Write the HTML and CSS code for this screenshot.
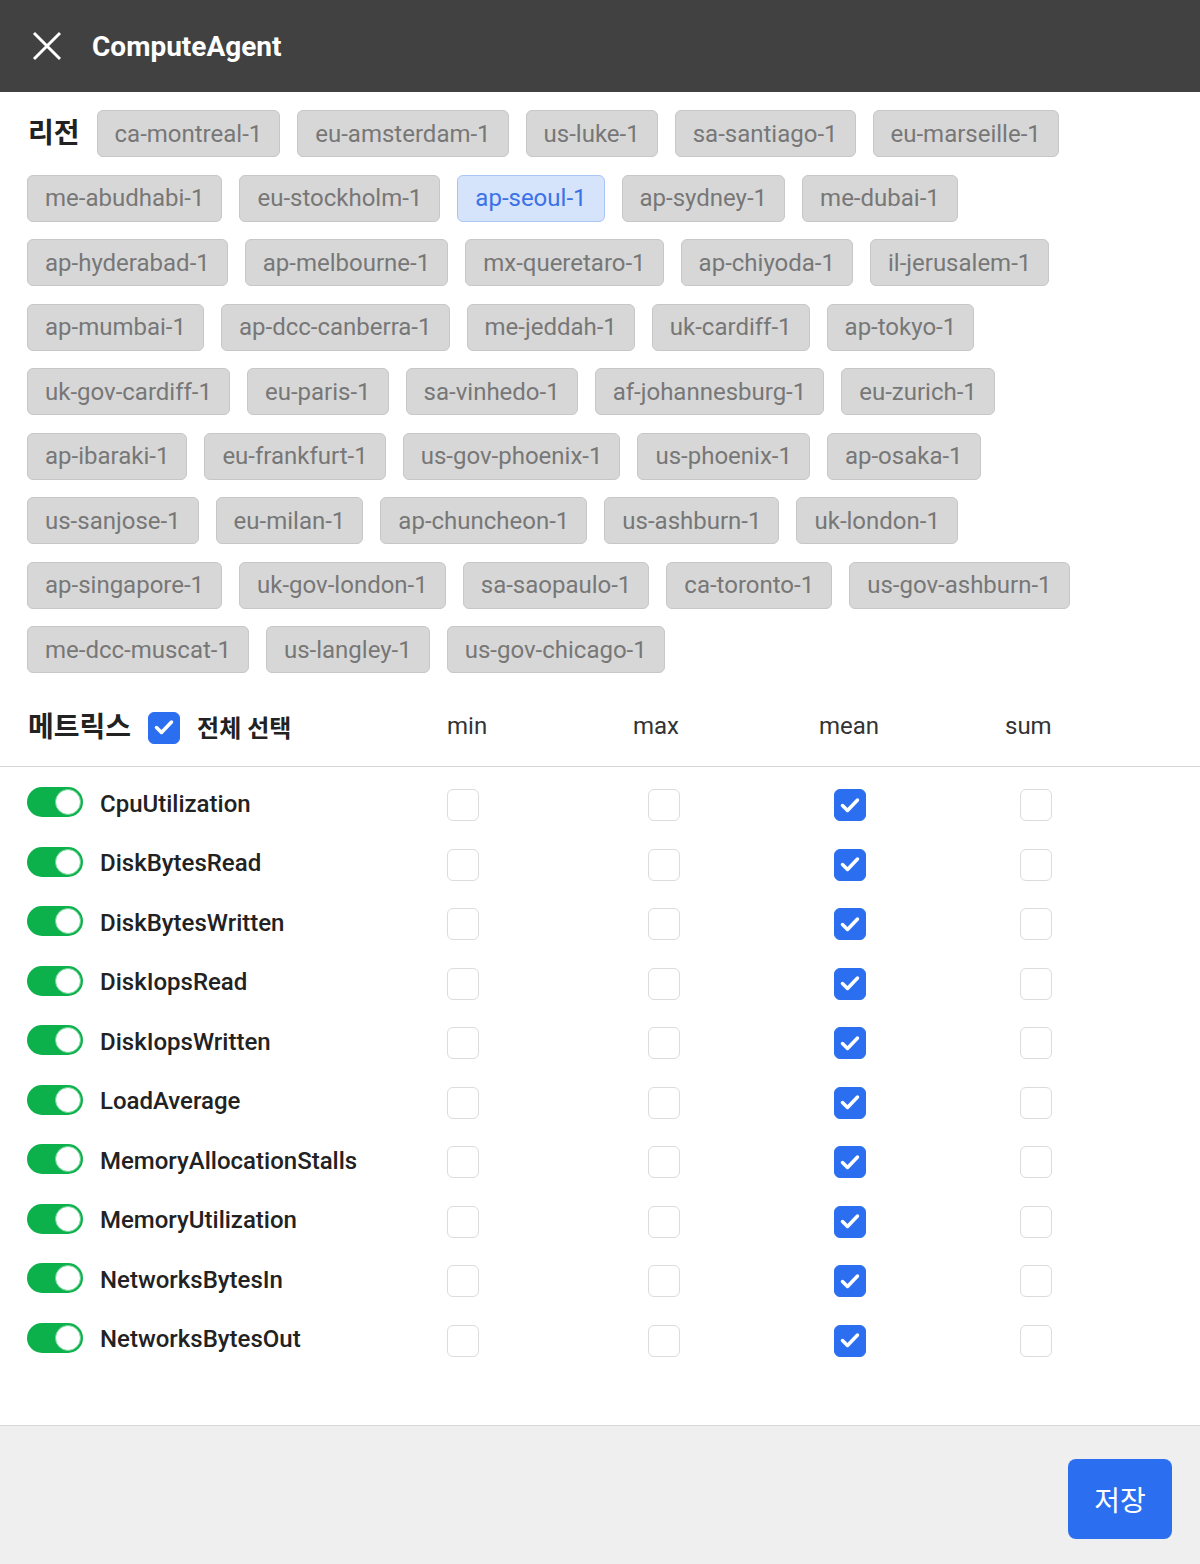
FILE: index.html
```html
<!DOCTYPE html>
<html lang="ko">
<head>
    <meta charset="utf-8">
    <title>ComputeAgent</title>
    <link rel="stylesheet" href="styles.css">
</head>
<body>
    <div class="page">
        <header class="topbar">
            <svg class="close-icon" width="30" height="30" viewBox="0 0 30 30">
                <path d="M2 2 L28 28 M28 2 L2 28" stroke="#fff" stroke-width="3" fill="none"/>
            </svg>
            <h1 class="title">ComputeAgent</h1>
        </header>

        <main class="content">
            <!-- 리전 선택 -->
            <section class="regions">
                <span class="section-label">리전</span>
                <span class="chip">ca-montreal-1</span>
                <span class="chip">eu-amsterdam-1</span>
                <span class="chip">us-luke-1</span>
                <span class="chip">sa-santiago-1</span>
                <span class="chip">eu-marseille-1</span>
                <span class="chip">me-abudhabi-1</span>
                <span class="chip">eu-stockholm-1</span>
                <span class="chip active">ap-seoul-1</span>
                <span class="chip">ap-sydney-1</span>
                <span class="chip">me-dubai-1</span>
                <span class="chip">ap-hyderabad-1</span>
                <span class="chip">ap-melbourne-1</span>
                <span class="chip">mx-queretaro-1</span>
                <span class="chip">ap-chiyoda-1</span>
                <span class="chip">il-jerusalem-1</span>
                <span class="chip">ap-mumbai-1</span>
                <span class="chip">ap-dcc-canberra-1</span>
                <span class="chip">me-jeddah-1</span>
                <span class="chip">uk-cardiff-1</span>
                <span class="chip">ap-tokyo-1</span>
                <span class="chip">uk-gov-cardiff-1</span>
                <span class="chip">eu-paris-1</span>
                <span class="chip">sa-vinhedo-1</span>
                <span class="chip">af-johannesburg-1</span>
                <span class="chip">eu-zurich-1</span>
                <span class="chip">ap-ibaraki-1</span>
                <span class="chip">eu-frankfurt-1</span>
                <span class="chip">us-gov-phoenix-1</span>
                <span class="chip">us-phoenix-1</span>
                <span class="chip">ap-osaka-1</span>
                <span class="chip">us-sanjose-1</span>
                <span class="chip">eu-milan-1</span>
                <span class="chip">ap-chuncheon-1</span>
                <span class="chip">us-ashburn-1</span>
                <span class="chip">uk-london-1</span>
                <span class="chip">ap-singapore-1</span>
                <span class="chip">uk-gov-london-1</span>
                <span class="chip">sa-saopaulo-1</span>
                <span class="chip">ca-toronto-1</span>
                <span class="chip">us-gov-ashburn-1</span>
                <span class="chip">me-dcc-muscat-1</span>
                <span class="chip">us-langley-1</span>
                <span class="chip">us-gov-chicago-1</span>
            </section>

            <!-- 메트릭스 -->
            <section class="metrics">
                <div class="metrics-head">
                    <div class="head-left">
                        <span class="section-label">메트릭스</span>
                        <span class="check checked"><svg viewBox="0 0 32 32"><path d="M8.5 16.5 L13.5 21.5 L23.5 11" stroke="#fff" stroke-width="3.5" fill="none" stroke-linecap="round" stroke-linejoin="round"/></svg></span>
                        <span class="select-all">전체 선택</span>
                    </div>
                    <span class="col-name">min</span>
                    <span class="col-name">max</span>
                    <span class="col-name">mean</span>
                    <span class="col-name">sum</span>
                </div>

                <div class="metric-list" id="metricList"></div>
            </section>
        </main>

        <footer class="footer">
            <button class="save-btn">저장</button>
        </footer>
    </div>

    <script type="text/javascript">
        var metrics = ["CpuUtilization", "DiskBytesRead", "DiskBytesWritten", "DiskIopsRead", "DiskIopsWritten",
            "LoadAverage", "MemoryAllocationStalls", "MemoryUtilization", "NetworksBytesIn", "NetworksBytesOut"];
        var cols = ["min", "max", "mean", "sum"];
        var tick = '<svg viewBox="0 0 32 32"><path d="M8.5 16.5 L13.5 21.5 L23.5 11" stroke="#fff" stroke-width="3.5" fill="none" stroke-linecap="round" stroke-linejoin="round"/></svg>';
        var list = document.getElementById("metricList");
        var html = "";
        for (var i = 0; i < metrics.length; i++) {
            html += '<div class="metric-row">';
            html += '<div class="metric-name"><span class="toggle on"><span class="knob"></span></span><span>' + metrics[i] + '</span></div>';
            for (var j = 0; j < cols.length; j++) {
                //기본값은 mean만 체크
                if (cols[j] == "mean")
                    html += '<div class="cell"><span class="check checked">' + tick + '</span></div>';
                else
                    html += '<div class="cell"><span class="check"></span></div>';
            }
            html += '</div>';
        }
        list.innerHTML = html;
    </script>
</body>
</html>
```

FILE: styles.css
```css
html, body {
    margin: 0;
    padding: 0;
    background: #fff;
    font-family: Roboto, "Noto Sans CJK KR", sans-serif;
}

.page {
    display: flex;
    flex-direction: column;
    min-height: 100vh;
}

.topbar {
    height: 92px;
    background-color: #414141;
    display: flex;
    align-items: center;
    padding-left: 32px;
    box-sizing: border-box;
}

    .topbar .close-icon {
        width: 30px;
        height: 30px;
        margin-right: 30px;
    }

    .topbar .title {
        margin: 0;
        color: #fff;
        font-size: 28px;
        font-weight: 700;
    }

.content {
    flex: 1;
}

.section-label {
    font-family: Roboto, "Noto Sans CJK KR", sans-serif;
    font-size: 28px;
    font-weight: 700;
    color: #222;
    line-height: 32px;
}

/* 리전 칩 */
.regions {
    display: flex;
    flex-wrap: wrap;
    align-items: center;
    gap: 17.5px 17px;
    padding: 18px 75px 0 27px;
}

    .regions .section-label {
        margin-left: 1px;
    }

.chip {
    height: 47px;
    box-sizing: border-box;
    display: inline-flex;
    align-items: center;
    padding: 0 17px;
    background-color: #d7d7d7;
    border: 1px solid #c7c7c7;
    border-radius: 6px;
    font-size: 24px;
    color: #777;
    white-space: nowrap;
}

    .chip.active {
        background-color: #d5e3fb;
        border-color: #aac6f7;
        color: #3b72e6;
    }

/* 메트릭스 */
.metrics-head,
.metric-row {
    display: grid;
    grid-template-columns: 420px repeat(4, 186px);
    align-items: center;
    padding-left: 27px;
}

.metrics-head {
    height: 94px;
    box-sizing: border-box;
    padding-top: 37px;
    padding-bottom: 25px;
    border-bottom: 1px solid #d4d4d4;
    line-height: 32px;
}

.head-left {
    display: flex;
    align-items: center;
}

    .head-left .section-label {
        margin-left: 1px;
    }

    .head-left .check {
        margin-left: 17px;
        margin-right: 17px;
    }

.select-all {
    font-size: 24px;
    font-weight: 700;
    color: #222;
    margin-top: 3px;
}

.col-name {
    font-size: 24px;
    color: #333;
    margin-top: -3px;
}

.metric-list {
    padding-top: 7px;
    padding-bottom: 55px;
}

.metric-row {
    height: 59.5px;
}

.metric-name {
    display: flex;
    align-items: center;
    font-size: 24px;
    font-weight: 500;
    color: #222;
    margin-top: -3px;
}

    .metric-name > span:last-child {
        margin-top: 3px;
    }

.toggle {
    width: 56px;
    height: 30px;
    border-radius: 15px;
    background-color: #0cb14b;
    position: relative;
    margin-right: 17px;
    flex-shrink: 0;
}

    .toggle .knob {
        position: absolute;
        top: 2px;
        right: 2px;
        width: 26px;
        height: 26px;
        box-sizing: border-box;
        border-radius: 50%;
        background: #fff;
        border: 1px solid #6fd497;
    }

.cell {
    display: flex;
    margin-top: 3px;
}

    .cell:nth-child(n+3) {
        padding-left: 15px;
    }

.check {
    width: 32px;
    height: 32px;
    box-sizing: border-box;
    border: 1.5px solid #dcdcdc;
    border-radius: 6px;
    background: #fff;
    display: inline-block;
}

    .check svg {
        display: block;
        width: 32px;
        height: 32px;
        margin: -1.5px;
    }

    .check.checked {
        background-color: #2b6ff0;
        border-color: #2b6ff0;
    }

.footer {
    height: 139px;
    box-sizing: border-box;
    background-color: #efefef;
    border-top: 1px solid #d8d8d8;
    display: flex;
    justify-content: flex-end;
    align-items: flex-start;
    padding: 33px 28px 0 0;
}

.save-btn {
    width: 104px;
    height: 80px;
    border: none;
    border-radius: 8px;
    background-color: #2b6ff0;
    color: #fff;
    font-family: "Noto Sans CJK KR", sans-serif;
    font-size: 28px;
    cursor: pointer;
}
```
